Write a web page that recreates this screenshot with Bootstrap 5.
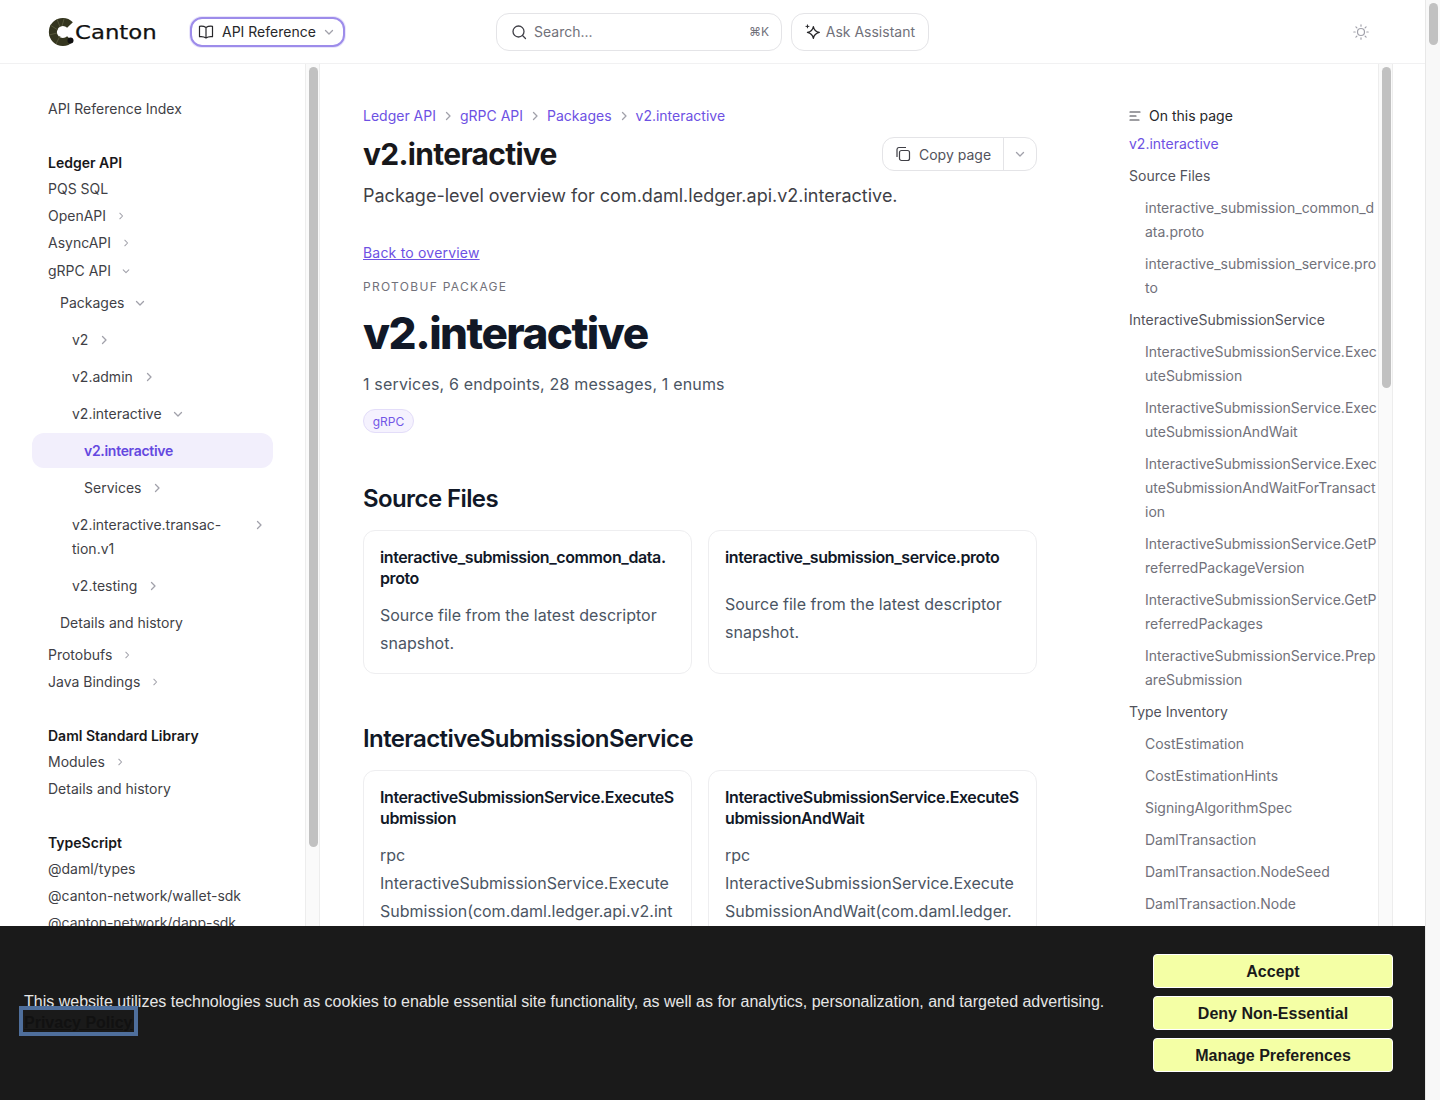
<!DOCTYPE html>
<html lang="en">
<head>
<meta charset="utf-8">
<title>v2.interactive</title>
<link href="https://cdn.jsdelivr.net/npm/bootstrap@5.3.0/dist/css/bootstrap.min.css" rel="stylesheet">
<style>
html,body{height:1100px;overflow:hidden}
body{font-family:Inter,"Liberation Sans",sans-serif;font-size:14px;color:#3f3f46;background:#fff}
a{text-decoration:none;color:inherit}
.app{height:1100px}
.page{width:1425px}
.top{height:64px;border-bottom:1px solid #f1f1f2;padding-left:48px;flex:none}
.logo-text{font-family:"DejaVu Sans",sans-serif;font-size:20px;line-height:24px;color:#111;margin-left:1px;display:inline-block;transform:scaleX(1.14);transform-origin:left center;-webkit-text-stroke:.25px #111}
.logo{width:109px;margin-right:33px;flex:none}
.product{width:155px;height:30px;border:2px solid #9d8cea;border-radius:12px;padding:0 6px;font-size:14px;color:#27272a;gap:8px;background:#fff;box-shadow:0 0 0 1px #e9e5fb;flex:none;white-space:nowrap}
.search{width:286px;height:38px;border:1px solid #e4e4e7;border-radius:13px;padding:0 12px 0 14px;color:#71717a;margin-left:151px;gap:7px;flex:none}
.kbd{font-size:12px;color:#71717a}
.ask{width:138px;height:38px;border:1px solid #e4e4e7;border-radius:13px;padding:0 13px;color:#71717a;gap:5px;margin-left:9px;flex:none;white-space:nowrap}
.sun{margin-left:424px}
.body-row{height:1036px}
.side{width:305px;padding:31px 32px 0 48px;overflow:hidden}
.index-row{height:27.5px;line-height:27px}
.track{width:15px;background:#fafafa;border-left:1px solid #ededed;border-right:1px solid #ededed;padding:3px 0 0 3px;flex:none}
.thumb{width:9px;background:#c1c1c1;border-radius:5px}
.thumb-side{height:780px}
.thumb-toc{height:321px}
.thumb-page{height:42px}
.page-track{height:1100px;border-right:0;background:#f8f8f8;border-left:1px solid #e8e8e8}
.nav-row{height:27px;line-height:26px;padding-bottom:1px;gap:11px}
.nav-row.nudge{margin-top:1px}
.nav-head{font-weight:600;color:#18181b;height:25.5px;line-height:26px;margin-top:27.5px}
.lvl2,.lvl3,.lvl4{min-height:37px;line-height:24px;padding:6.5px 0;gap:11px}
.lvl2{padding-left:12px}
.lvl3{padding-left:24px}
.lvl4{padding-left:36px}
.active-row{margin:.5px 0 1.5px -16px;width:241px;height:35px;padding-left:52px;background:#f2effc;border-radius:12px;color:#6448e0;font-weight:600;letter-spacing:-.3px}
.wrap-chev{margin:7px 9px 0 0}
.main{width:809px;padding:40px 92px 0 43px;overflow:hidden}
.crumb{color:#6d51e3;line-height:24px;height:24px;gap:7px}
.title-row{height:36px;margin-top:8px}
.title{font-size:30px;font-weight:700;line-height:36px;margin:0;color:#18181b;letter-spacing:-.7px}
.copy{height:34px;border:1px solid #e4e4e7;border-radius:12px;color:#52525b}
.copy-a{width:121px;gap:8px;padding-left:12px;border-right:1px solid #e4e4e7;height:32px}
.copy-b{width:32px;height:32px}
.lede{font-size:18px;line-height:28px;margin:10px 0 0;color:#3f3f46}
.back{color:#6d51e3;text-decoration:underline;display:block;margin-top:31px;line-height:24px;letter-spacing:.2px}
.eyebrow{font-size:12px;letter-spacing:1.3px;color:#71717a;line-height:18px;margin-top:13px}
.big{font-size:44px;font-weight:800;line-height:56px;letter-spacing:-1.5px;color:#111827;margin:9px 0 0}
.meta{font-size:16px;line-height:28px;color:#4b5563;margin:9px 0 0;letter-spacing:.17px}
.chip{width:51px;height:24px;border:1px solid #e3ddf9;background:#f5f2fe;color:#7357e6;font-size:12px;border-radius:12px;margin-top:11px;padding-top:1px}
.h2{font-size:24px;font-weight:600;line-height:32px;color:#111827;margin:50px 0 15px;letter-spacing:-.6px}
.h2.second{margin-top:49px}
.cards{--bs-gutter-x:16px;--bs-gutter-y:16px}
.doc{border:1px solid #eeeef0;border-radius:12px;height:100%;padding:16px;--bs-card-border-color:#eeeef0}
.doc h3{font-size:16px;font-weight:600;line-height:21px;color:#111827;margin:0 0 12px;overflow-wrap:anywhere;letter-spacing:-.4px}
.doc h3.short{margin-bottom:22px}
.doc p{font-size:16px;line-height:28px;color:#4b5563;margin:0;overflow-wrap:anywhere}
.toc-wrap{width:249px;padding:40px 0 0 0;overflow:hidden}
.toc-head{line-height:24px;height:24px;color:#27272a;gap:8px}
.toc-wrap a{display:block;color:#71717a;line-height:24px;overflow-wrap:anywhere}
.toc-wrap .t1{margin-top:8px}
.toc-wrap .t2{padding-left:16px;margin-top:8px}
.toc-wrap .on{color:#6d51e3;margin-top:4px;height:24px}
.toc-wrap .t1.dk{color:#52525b}
.cookie{position:fixed;left:0;bottom:0;width:1425px;height:174px;background:#1a1a1a;z-index:10;padding:28px 32px 0 24px;font-family:"Liberation Sans",Arial,sans-serif}
.cookie-text{width:1129px;font-size:16px;line-height:20px;color:#e6e6e6;padding-top:38px}
.pp{display:inline-block;margin-left:-5px;margin-top:-10px;padding:0 1px;height:30px;line-height:26px;vertical-align:-1px;border:4px solid #4f6f9c;font-weight:700;color:#111;text-decoration:underline}
.ck{display:block;width:240px;height:34px;background:#f4ffa5;border:1px solid #fff;border-radius:4px;color:#1a1a1a;font-weight:700;font-size:16px;line-height:30px;padding:2px 0 0;margin-bottom:8px;font-family:"Liberation Sans",Arial,sans-serif}
</style>
</head>
<body>
<svg width="0" height="0" class="position-absolute"><defs>
<symbol id="r" viewBox="0 0 10 10"><path d="M3.5 1.500 7 5 3.5 8.500" fill="none" stroke="#a1a1aa" stroke-width="1.3" stroke-linecap="round" stroke-linejoin="round"/></symbol>
<symbol id="d" viewBox="0 0 10 10"><path d="M1.500 3.500 5 7 8.500 3.500" fill="none" stroke="#a1a1aa" stroke-width="1.3" stroke-linecap="round" stroke-linejoin="round"/></symbol>
</defs></svg>
<div class="app d-flex">
<div class="page d-flex flex-column">
<header class="top d-flex align-items-center">
  <a class="logo d-flex align-items-center" href="#">
    <svg width="26" height="28" viewBox="0 0 26 28" class="flex-shrink-0"><path d="M22 7A10 10 0 1 0 22 21" fill="none" stroke="#35361f" stroke-width="8"/><circle cx="22.500" cy="22.500" r="3" fill="#111"/><path d="M9 1 12 9M2 7l8 5M1 17l8-2M8 26l4-8M16 1l-2 7" stroke="#55563a" stroke-width="1"/></svg>
    <span class="logo-text">Canton</span>
  </a>
  <button class="product d-flex align-items-center" type="button">
    <svg width="16" height="16" viewBox="0 0 16 16" fill="none" stroke="#27272a" stroke-width="1.200" stroke-linejoin="round"><path d="M8 3.500C6.500 2.500 4 2 1.500 2.300v10.400C4 12.400 6.500 12.900 8 14c1.500-1.100 4-1.600 6.500-1.300V2.300C12 2 9.500 2.500 8 3.500ZM8 3.500V14"/></svg>
    <span>API Reference</span>
    <svg width="10" height="10"><use href="#d"/></svg>
  </button>
  <div class="search d-flex align-items-center">
    <svg width="16" height="16" viewBox="0 0 16 16" fill="none" stroke="#3f3f46" stroke-width="1.300" stroke-linecap="round"><circle cx="7.500" cy="7.500" r="5.500"/><path d="m11.500 11.500 3 3"/></svg>
    <span class="flex-grow-1">Search...</span><span class="kbd">⌘K</span>
  </div>
  <div class="ask d-flex align-items-center">
    <svg width="16" height="16" viewBox="0 0 16 16" fill="none" stroke="#27272a" stroke-width="1.300" stroke-linejoin="round"><path d="M8.500 2.500c.6 3.200 2 5 6 6-4 1-5.400 2.800-6 6-.6-3.200-2-5-6-6 4-1 5.400-2.800 6-6Z"/><path d="M2.500 .8v3M1 2.300h3" stroke-linecap="round" stroke-width="1"/></svg>
    <span>Ask Assistant</span>
  </div>
  <svg class="sun" width="16" height="16" viewBox="0 0 16 16" fill="none" stroke="#a1a1aa" stroke-width="1.200" stroke-linecap="round"><circle cx="8" cy="8" r="3.500"/><path d="M8 .8v1.400M8 13.800v1.400M.8 8h1.400M13.800 8h1.400M2.900 2.900l1 1M12.100 12.100l1 1M2.900 13.100l1-1M12.100 3.900l1-1"/></svg>
</header>
<div class="body-row d-flex">
  <aside class="side flex-shrink-0">
    <div class="index-row"><a href="#">API Reference Index</a></div>
    <div class="nav-head">Ledger API</div>
    <div class="nav-row d-flex align-items-center"><a href="#">PQS SQL</a></div>
    <div class="nav-row d-flex align-items-center"><a href="#">OpenAPI</a><svg width="8" height="8"><use href="#r"/></svg></div>
    <div class="nav-row d-flex align-items-center"><a href="#">AsyncAPI</a><svg width="8" height="8"><use href="#r"/></svg></div>
    <div class="nav-row nudge d-flex align-items-center"><a href="#">gRPC API</a><svg width="8" height="8"><use href="#d"/></svg></div>
    <div class="lvl2 d-flex align-items-center"><a href="#">Packages</a><svg width="10" height="10"><use href="#d"/></svg></div>
    <div class="lvl3 d-flex align-items-center"><a href="#">v2</a><svg width="10" height="10"><use href="#r"/></svg></div>
    <div class="lvl3 d-flex align-items-center"><a href="#">v2.admin</a><svg width="10" height="10"><use href="#r"/></svg></div>
    <div class="lvl3 d-flex align-items-center"><a href="#">v2.interactive</a><svg width="10" height="10"><use href="#d"/></svg></div>
    <div class="active-row d-flex align-items-center"><a href="#">v2.interactive</a></div>
    <div class="lvl4 d-flex align-items-center"><a href="#">Services</a><svg width="10" height="10"><use href="#r"/></svg></div>
    <div class="lvl3 d-flex align-items-start justify-content-between"><a href="#">v2.interactive.transac-<br>tion.v1</a><svg width="10" height="10" class="wrap-chev"><use href="#r"/></svg></div>
    <div class="lvl3 d-flex align-items-center"><a href="#">v2.testing</a><svg width="10" height="10"><use href="#r"/></svg></div>
    <div class="lvl2 d-flex align-items-center"><a href="#">Details and history</a></div>
    <div class="nav-row d-flex align-items-center"><a href="#">Protobufs</a><svg width="8" height="8"><use href="#r"/></svg></div>
    <div class="nav-row d-flex align-items-center"><a href="#">Java Bindings</a><svg width="8" height="8"><use href="#r"/></svg></div>
    <div class="nav-head">Daml Standard Library</div>
    <div class="nav-row d-flex align-items-center"><a href="#">Modules</a><svg width="8" height="8"><use href="#r"/></svg></div>
    <div class="nav-row d-flex align-items-center"><a href="#">Details and history</a></div>
    <div class="nav-head">TypeScript</div>
    <div class="nav-row d-flex align-items-center"><a href="#">@daml/types</a></div>
    <div class="nav-row d-flex align-items-center"><a href="#">@canton-network/wallet-sdk</a></div>
    <div class="nav-row d-flex align-items-center"><a href="#">@canton-network/dapp-sdk</a></div>
  </aside>
  <div class="track"><div class="thumb thumb-side"></div></div>
  <main class="main flex-shrink-0">
    <nav class="crumb d-flex align-items-center"><a href="#">Ledger API</a><svg width="10" height="10"><use href="#r"/></svg><a href="#">gRPC API</a><svg width="10" height="10"><use href="#r"/></svg><a href="#">Packages</a><svg width="10" height="10"><use href="#r"/></svg><a href="#">v2.interactive</a></nav>
    <div class="title-row d-flex align-items-center justify-content-between">
      <h1 class="title">v2.interactive</h1>
      <div class="copy d-flex align-items-center">
        <div class="copy-a d-flex align-items-center">
          <svg width="16" height="16" viewBox="0 0 16 16" fill="none" stroke="#3f3f46" stroke-width="1.200" stroke-linejoin="round"><rect x="4.500" y="4.500" width="10" height="10" rx="2"/><path d="M2 11V3.500A2 2 0 0 1 3.800 1.500H11"/></svg>
          <span>Copy page</span>
        </div>
        <div class="copy-b d-flex align-items-center justify-content-center"><svg width="10" height="10"><use href="#d"/></svg></div>
      </div>
    </div>
    <p class="lede">Package-level overview for com.daml.ledger.api.v2.interactive.</p>
    <a class="back" href="#">Back to overview</a>
    <div class="eyebrow">PROTOBUF PACKAGE</div>
    <div class="big">v2.interactive</div>
    <p class="meta">1 services, 6 endpoints, 28 messages, 1 enums</p>
    <div class="chip d-flex align-items-center justify-content-center">gRPC</div>
    <h2 class="h2">Source Files</h2>
    <div class="row cards">
      <div class="col-6"><div class="doc card"><h3>interactive_submission_common_data.<wbr>proto</h3><p>Source file from the latest descriptor snapshot.</p></div></div>
      <div class="col-6"><div class="doc card"><h3 class="short">interactive_submission_service.proto</h3><p>Source file from the latest descriptor snapshot.</p></div></div>
    </div>
    <h2 class="h2 second">InteractiveSubmissionService</h2>
    <div class="row cards">
      <div class="col-6"><div class="doc card"><h3>InteractiveSubmissionService.ExecuteSubmission</h3><p>rpc<br>InteractiveSubmissionService.Execute<wbr>Submission(com.daml.ledger.api.v2.interactive.ExecuteSubmissionRequest)</p></div></div>
      <div class="col-6"><div class="doc card"><h3>InteractiveSubmissionService.ExecuteSubmissionAndWait</h3><p>rpc<br>InteractiveSubmissionService.Execute<wbr>SubmissionAndWait(com.daml.ledger.api.v2.interactive.ExecuteSubmissionAndWaitRequest)</p></div></div>
    </div>
  </main>
  <div class="toc-wrap flex-shrink-0">
      <div class="toc-head d-flex align-items-center">
        <svg width="12" height="12" viewBox="0 0 12 12" fill="none" stroke="#3f3f46" stroke-width="1.200" stroke-linecap="round"><path d="M1 2h10M1 6h6M1 10h9"/></svg><span>On this page</span>
      </div>
      <a class="on" href="#">v2.interactive</a>
      <a class="t1 dk" href="#">Source Files</a>
      <a class="t2" href="#">interactive_submission_common_data.proto</a>
      <a class="t2" href="#">interactive_submission_service.proto</a>
      <a class="t1 dk" href="#">InteractiveSubmissionService</a>
      <a class="t2" href="#">InteractiveSubmissionService.ExecuteSubmission</a>
      <a class="t2" href="#">InteractiveSubmissionService.ExecuteSubmissionAndWait</a>
      <a class="t2" href="#">InteractiveSubmissionService.ExecuteSubmissionAndWaitForTransaction</a>
      <a class="t2" href="#">InteractiveSubmissionService.GetPreferredPackageVersion</a>
      <a class="t2" href="#">InteractiveSubmissionService.GetPreferredPackages</a>
      <a class="t2" href="#">InteractiveSubmissionService.PrepareSubmission</a>
      <a class="t1 dk" href="#">Type Inventory</a>
      <a class="t2" href="#">CostEstimation</a>
      <a class="t2" href="#">CostEstimationHints</a>
      <a class="t2" href="#">SigningAlgorithmSpec</a>
      <a class="t2" href="#">DamlTransaction</a>
      <a class="t2" href="#">DamlTransaction.NodeSeed</a>
      <a class="t2" href="#">DamlTransaction.Node</a>
  </div>
  <div class="track"><div class="thumb thumb-toc"></div></div>
</div>
</div>
<div class="track page-track"><div class="thumb thumb-page"></div></div>
</div>
<section class="cookie d-flex justify-content-between">
  <div class="cookie-text">This website utilizes technologies such as cookies to enable essential site functionality, as well as for analytics, personalization, and targeted advertising.<br><a class="pp" href="#">Privacy Policy</a></div>
  <div>
    <button class="ck btn" type="button">Accept</button>
    <button class="ck btn" type="button">Deny Non-Essential</button>
    <button class="ck btn" type="button">Manage Preferences</button>
  </div>
</section>
<script src="https://cdn.jsdelivr.net/npm/bootstrap@5.3.0/dist/js/bootstrap.bundle.min.js"></script>
</body>
</html>
